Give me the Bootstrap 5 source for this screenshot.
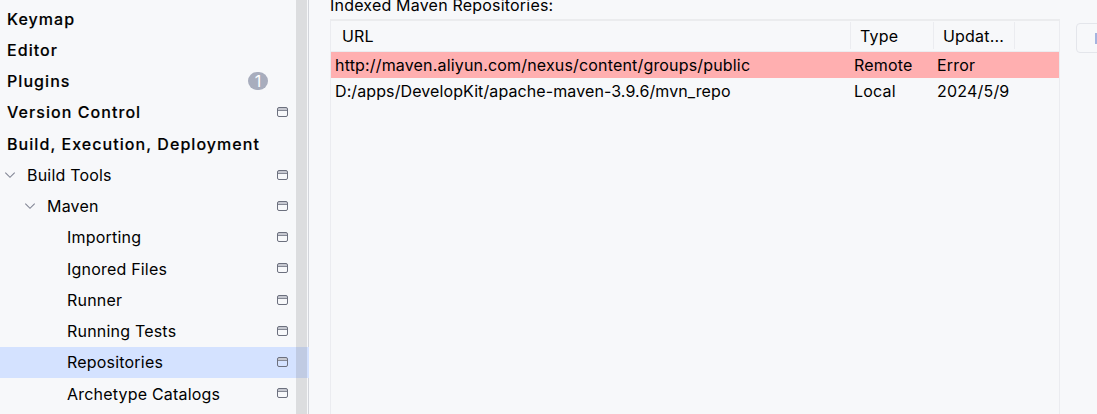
<!DOCTYPE html>
<html lang="en">
<head>
<meta charset="utf-8">
<meta name="viewport" content="width=device-width, initial-scale=1">
<title>Settings - Maven Repositories</title>
<link rel="stylesheet" href="https://cdn.jsdelivr.net/npm/bootstrap@5.3.0/dist/css/bootstrap.min.css">
<style>
  body { height: 414px; background: #f7f8fa; color: #000; font: 16px/24px Inter, sans-serif; letter-spacing: .2px; }
  .sidebar { width: 309px; padding-top: 3.1px; border-right: 1px solid #d3d5db; }
  .tree-row { height: 31.25px; padding: 0 20px 0 7px; white-space: nowrap; }
  .tree-row.top { font-weight: 500; letter-spacing: 1.06px; -webkit-text-stroke: .15px #000; }
  .tree-row.l1 { padding-left: 3px; }
  .tree-row.l2 { padding-left: 23px; }
  .tree-row.l3 { padding-left: 67px; }
  .tree-row.selected { background: #d4e2ff; margin-right: -1px; padding-right: 21px; position: relative; }
  .chevron { width: 14px; height: 14px; margin-right: 10px; }
  .scope { width: 11px; height: 10px; margin-left: auto; margin-bottom: .7px; }
  .scroll-thumb { top: 0; bottom: 0; right: 1px; width: 11px; background: rgba(115,115,115,.2); }
  .count { width: 20px; height: 18px; margin-right: 20px; border-radius: 9px; background: #a8adbd; color: #fff; font-weight: 400; line-height: 18px; letter-spacing: 0; -webkit-text-stroke: 0; }
  .caption { height: 19px; line-height: 10px; flex: none; }
  .repos { width: 730px; border: 1px solid #ebecf0; border-top: 2px solid #ebecee; border-bottom: 0; }
  .grid-row { display: grid; grid-template-columns: 519px 83px 81px 1fr; height: 26px; line-height: 27px; padding-left: 1px; white-space: nowrap; }
  .grid-row > div { padding-left: 3px; }
  .grid-head { height: 31px; line-height: 31px; border-bottom: 1px solid #ebecf0; grid-template-columns: 520px 83px 81px 1fr; padding-left: 0; }
  .grid-head > div { padding-left: 9px; height: 27px; margin-top: 1px; line-height: 29px; border-right: 1px solid #ebecf0; }
  .grid-head > div:first-child { padding-left: 11px; }
  .grid-head > div:last-child { border: 0; }
  .failed { background: #ffafb0; }
  .url-remote { letter-spacing: .17px; }
  .url-local { letter-spacing: .1px; }
  .tool-btn { width: 40px; height: 30px; margin: 23px 0 0 16px; border: 1.5px solid #e4e6eb; border-radius: 4px; padding: 9px 0 0 18px; }
  .tool-btn i { display: block; width: 12px; height: 11px; background: #a5b4df; }
</style>
</head>
<body class="d-flex overflow-hidden m-0">
<svg class="d-none" xmlns="http://www.w3.org/2000/svg">
  <symbol id="project" viewBox="0 0 11 10"><path d="M1 1h9v2.5H1z" fill="#c6c8d0"/><rect x=".5" y=".5" width="10" height="9" rx="1.5" fill="none" stroke="#6c707e"/><path d="M1 3.5h9" stroke="#858995"/></symbol>
  <symbol id="down" viewBox="0 0 14 14"><path d="M2.3 4.7 7 9.3l4.7-4.6" fill="none" stroke="#818594" stroke-width="1.1"/></symbol>
</svg>
<nav class="sidebar position-relative flex-shrink-0 h-100">
  <div class="tree-row top d-flex align-items-center"><span>Keymap</span></div>
  <div class="tree-row top d-flex align-items-center"><span>Editor</span></div>
  <div class="tree-row top d-flex align-items-center"><span>Plugins</span><span class="count ms-auto text-center">1</span></div>
  <div class="tree-row top d-flex align-items-center"><span>Version Control</span><svg class="scope"><use href="#project"/></svg></div>
  <div class="tree-row top d-flex align-items-center"><span>Build, Execution, Deployment</span></div>
  <div class="tree-row l1 d-flex align-items-center"><svg class="chevron"><use href="#down"/></svg><span>Build Tools</span><svg class="scope"><use href="#project"/></svg></div>
  <div class="tree-row l2 d-flex align-items-center"><svg class="chevron"><use href="#down"/></svg><span>Maven</span><svg class="scope"><use href="#project"/></svg></div>
  <div class="tree-row l3 d-flex align-items-center"><span>Importing</span><svg class="scope"><use href="#project"/></svg></div>
  <div class="tree-row l3 d-flex align-items-center"><span>Ignored Files</span><svg class="scope"><use href="#project"/></svg></div>
  <div class="tree-row l3 d-flex align-items-center"><span>Runner</span><svg class="scope"><use href="#project"/></svg></div>
  <div class="tree-row l3 d-flex align-items-center"><span>Running Tests</span><svg class="scope"><use href="#project"/></svg></div>
  <div class="tree-row l3 selected d-flex align-items-center"><span>Repositories</span><svg class="scope"><use href="#project"/></svg></div>
  <div class="tree-row l3 d-flex align-items-center"><span>Archetype Catalogs</span><svg class="scope"><use href="#project"/></svg></div>
  <div class="scroll-thumb position-absolute"></div>
</nav>
<main class="d-flex flex-grow-1 h-100">
  <section class="d-flex flex-column" style="margin-left:21px">
    <div class="caption">Indexed Maven Repositories:</div>
    <div class="repos flex-grow-1">
      <div class="grid-row grid-head"><div>URL</div><div>Type</div><div>Updat...</div><div></div></div>
      <div class="grid-row failed"><div class="url-remote">http://maven.aliyun.com/nexus/content/groups/public</div><div>Remote</div><div>Error</div></div>
      <div class="grid-row"><div class="url-local">D:/apps/DevelopKit/apache-maven-3.9.6/mvn_repo</div><div>Local</div><div>2024/5/9</div></div>
    </div>
  </section>
  <div class="tool-btn flex-shrink-0"><i></i></div>
</main>
<script src="https://cdn.jsdelivr.net/npm/bootstrap@5.3.0/dist/js/bootstrap.bundle.min.js"></script>
</body>
</html>
